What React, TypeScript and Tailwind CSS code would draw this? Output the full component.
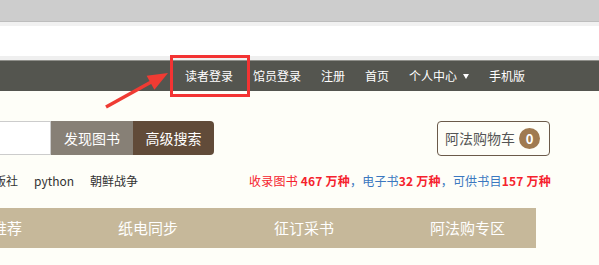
import React from "react";

const font = { fontFamily: '"Noto Sans CJK SC", "Noto Sans", sans-serif' };

export default function App() {
  const topNav = ["读者登录", "馆员登录", "注册", "首页"];
  const nav = ["新书推荐", "纸电同步", "征订采书", "阿法购专区"];
  return (
    <div className="relative w-[599px] h-[265px] overflow-hidden bg-[#fefef8]" style={font}>
      {/* browser chrome */}
      <div className="h-[22px] bg-[#cdcdcd] border-b border-[#bdbdbd]" />
      <div className="h-[4px] bg-[#f1f1f1]" />
      <div className="h-[30px] bg-white" />
      <div className="h-[4px] bg-[#efefef]" />
      {/* dark top bar */}
      <div className="h-[31px] bg-[#54554f] border-t border-[#8f8f8a] flex">
        <div className="w-[535px] flex justify-end items-center text-[12px] leading-[14px] text-white">
          {topNav.map((t) => (
            <span key={t} className="px-[10px]">{t}</span>
          ))}
          <span className="px-[10px] flex items-center gap-[6px]">
            个人中心
            <svg width="6" height="5" viewBox="0 0 6 5"><path d="M0 0h6L3 5z" fill="#fff" /></svg>
          </span>
          <span className="px-[10px]">手机版</span>
        </div>
      </div>

      {/* search row */}
      <div className="mt-[30px] flex items-start">
        <div className="w-[51px] h-[34px] bg-white border-y border-r border-[#cccccc]" />
        <div className="w-[82px] h-[34px] bg-[#878076] text-white text-[14px] flex items-center justify-center">发现图书</div>
        <div className="w-[81px] h-[34px] bg-[#614b39] text-white text-[14px] flex items-center justify-center rounded-r-[4px]">高级搜索</div>
        <div className="ml-[223px] w-[113px] h-[35px] border border-[#6b5a4a] rounded-[4px] flex items-center pl-[7px] gap-[4px] text-[14px] text-[#555]">
          <span>阿法购物车</span>
          <span className="w-[21px] h-[21px] rounded-full bg-[#a07a50] text-white text-[13px] font-bold flex items-center justify-center leading-none">0</span>
        </div>
      </div>

      {/* hot words + stats */}
      <div className="mt-[17px] h-[16px] flex items-center text-[12px] leading-[16px]">
        <div className="flex items-center gap-[16px] text-[#333] ml-[-18px]">
          <span>出版社</span>
          <span>python</span>
          <span>朝鲜战争</span>
        </div>
        <div className="ml-[111px] flex items-center whitespace-nowrap tracking-[0.2px]">
          <span className="text-[#f5222d]">收录图书</span>
          <span className="text-[#f5222d] font-bold">&nbsp;467 万种</span>
          <span className="text-[#3b78c0]">，电子书</span>
          <span className="text-[#f5222d] font-bold">32 万种</span>
          <span className="text-[#3b78c0]">，可供书目</span>
          <span className="text-[#f5222d] font-bold">157 万种</span>
        </div>
      </div>

      {/* nav bar */}
      <div className="mt-[19px] w-[536px] h-[40px] bg-[#c6b89a] flex items-center overflow-hidden">
        <div className="flex ml-[-38px] text-[15px] leading-[18px] text-white">
          {nav.map((t) => (
            <span key={t} className="w-[156px] shrink-0">{t}</span>
          ))}
        </div>
      </div>

      {/* annotation overlays */}
      <div className="absolute left-[170px] top-[55px] w-[80px] h-[42px] border-[3px] border-[#f33333]" />
      <svg className="absolute left-0 top-0" width="599" height="265" viewBox="0 0 599 265">
        <line x1="106" y1="107" x2="153" y2="81" stroke="#ef3b33" strokeWidth="3.5" />
        <polygon points="168,73 146.6,75.7 154.4,89.7" fill="#ef3b33" />
      </svg>
    </div>
  );
}
